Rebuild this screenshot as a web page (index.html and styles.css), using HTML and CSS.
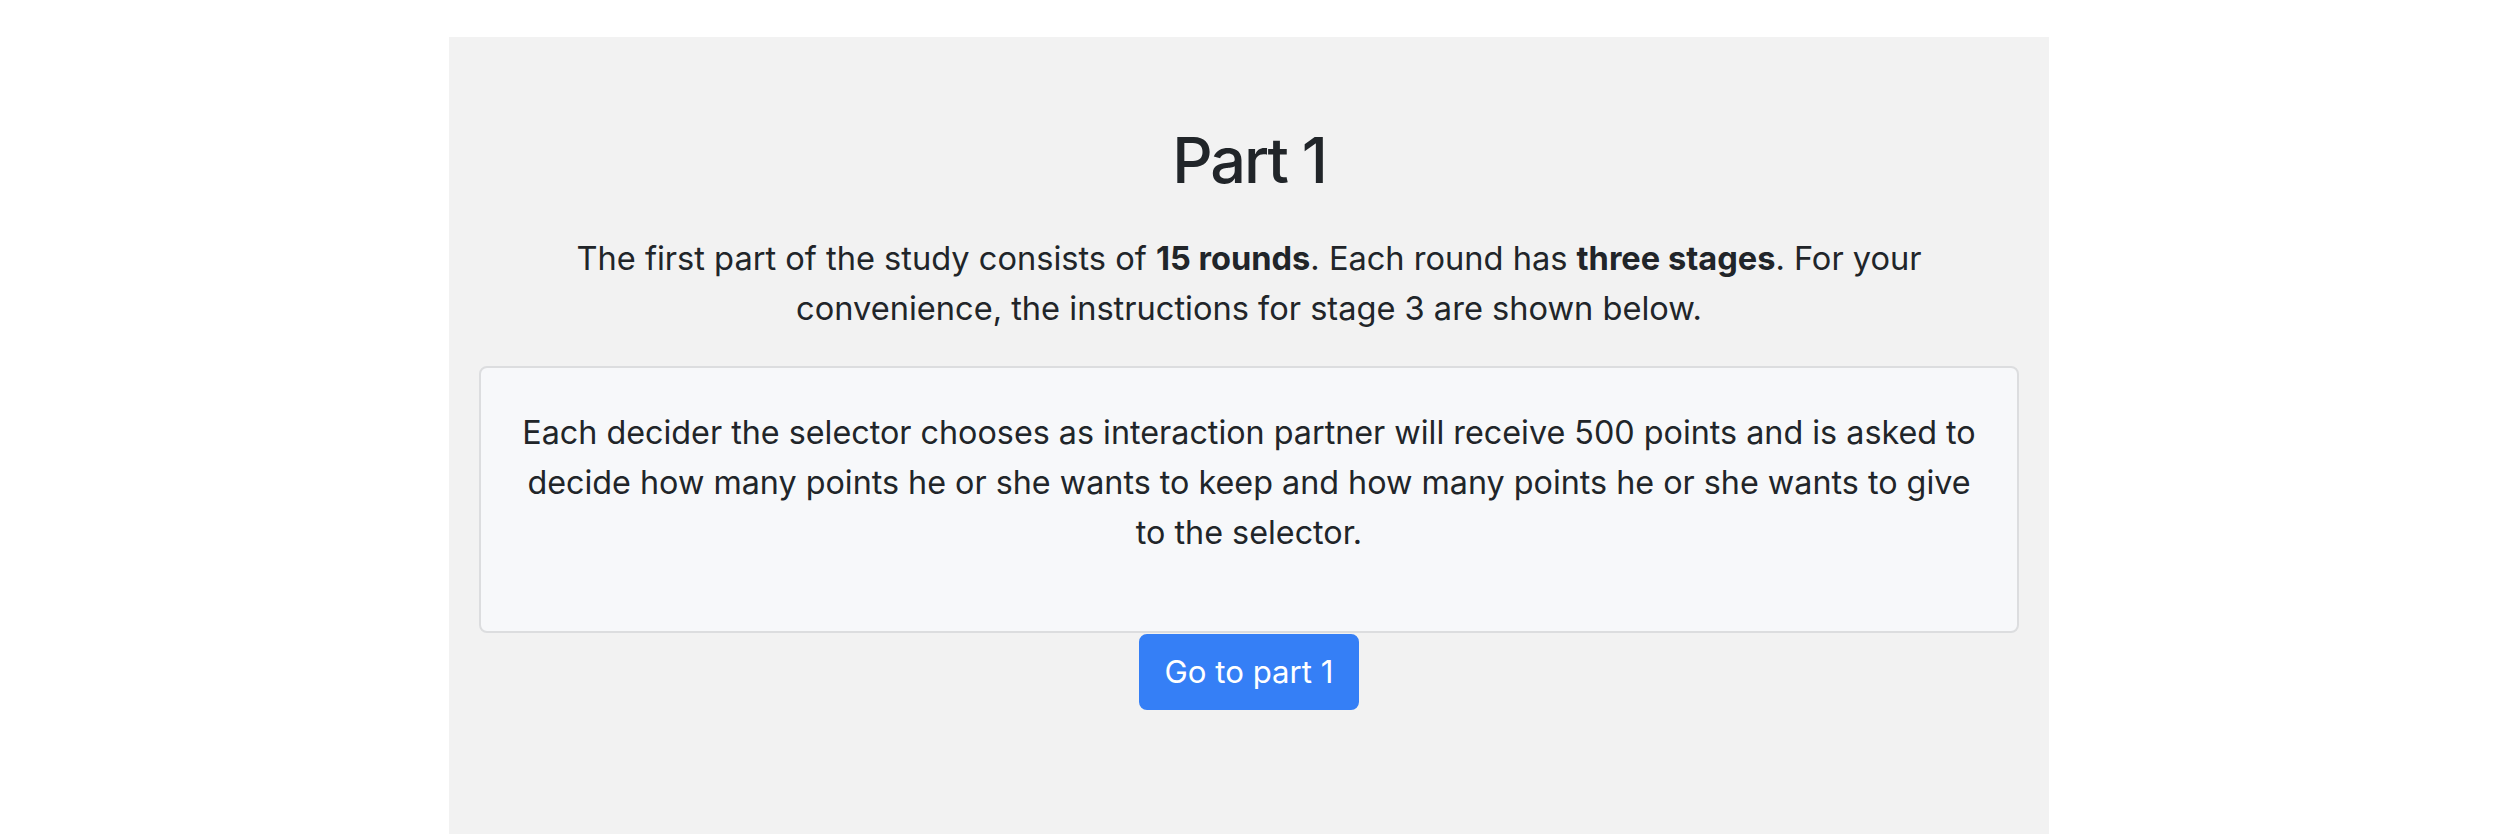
FILE: index.html
```html
<!DOCTYPE html>
<html lang="en">
<head>
<meta charset="utf-8">
<title>Part 1</title>
<link rel="stylesheet" href="styles.css">
</head>
<body>
<div class="page">
  <h1 class="title">Part 1</h1>
  <p class="intro">The first part of the study consists of <b>15 rounds</b>. Each round has <b>three stages</b>. For your convenience, the instructions for stage 3 are shown below.</p>
  <div class="card">
    <p>Each decider the selector chooses as interaction partner will receive 500 points and is asked to decide how many points he or she wants to keep and how many points he or she wants to give to the selector.</p>
  </div>
  <div class="actions">
    <button class="btn">Go to part 1</button>
  </div>
</div>
</body>
</html>
```
FILE: styles.css
```css
html, body {
  margin: 0;
  padding: 0;
  background: #ffffff;
}
body {
  font-family: Inter, "Noto Sans", "Liberation Sans", sans-serif;
  color: #212529;
  overflow: hidden;
}
.page {
  width: 1600px;
  box-sizing: border-box;
  margin: 37px auto 0;
  padding: 85px 30px 200px;
  background: #f2f2f2;
  min-height: 900px;
  text-align: center;
}
.title {
  margin: 0 0 36px;
  font-size: 63px;
  font-weight: 500;
  line-height: 76px;
  letter-spacing: -2px;
}
.intro {
  margin: 0 0 33px;
  font-size: 32.6px;
  line-height: 49.5px;
}
.intro b {
  font-weight: 700;
}
.card {
  background: #f7f8fa;
  border: 2px solid #dcdddf;
  border-radius: 8px;
  padding: 40px 40px 41px;
}
.card p {
  margin: 0 0 32px;
  font-size: 32.3px;
  line-height: 50px;
}
.actions {
  display: flex;
  justify-content: center;
  padding-top: 1px;
}
.btn {
  font-family: inherit;
  font-size: 31.2px;
  line-height: 48px;
  padding: 12px 24px;
  border: 2px solid #357ff6;
  border-radius: 8px;
  background: #357ff6;
  color: #ffffff;
  cursor: pointer;
}
```
